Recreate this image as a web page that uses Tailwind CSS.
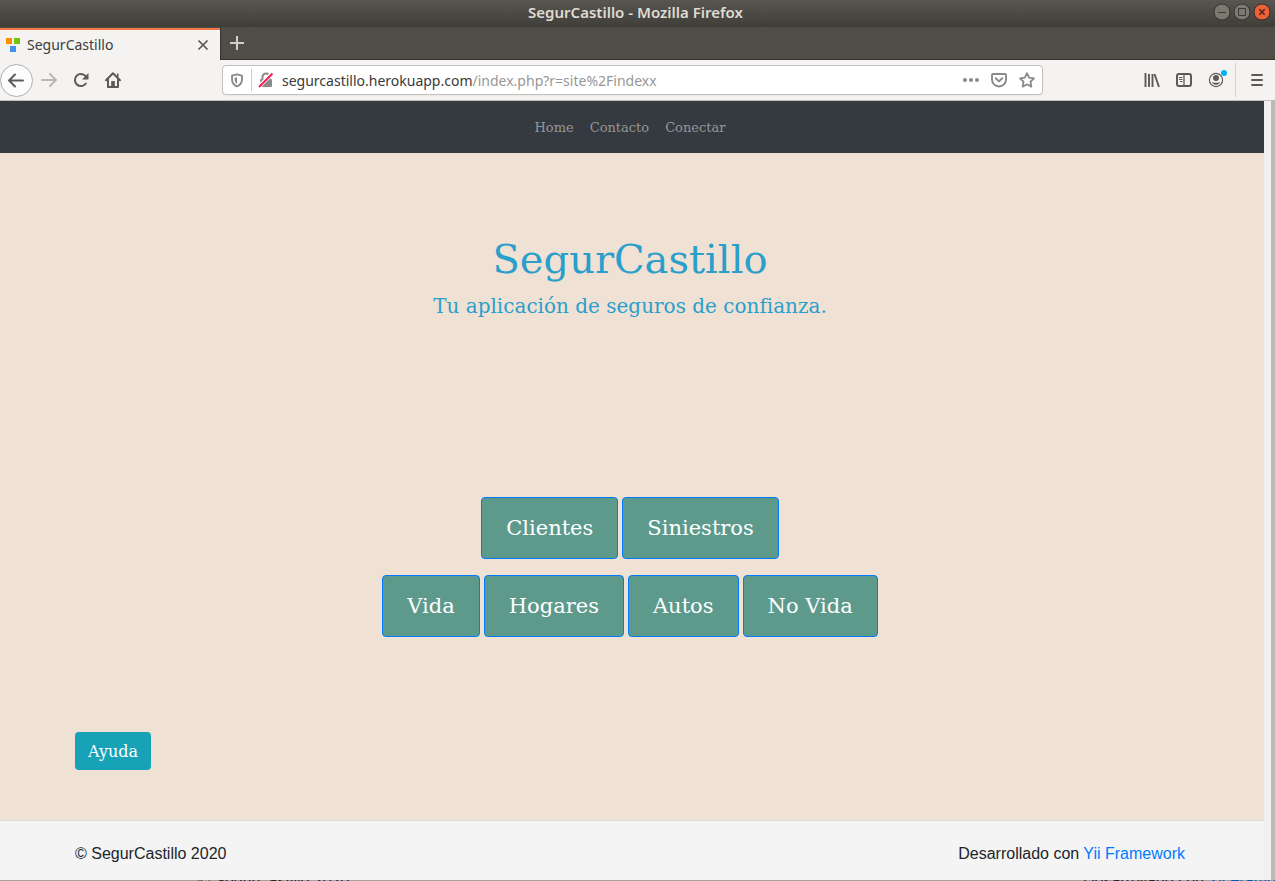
<!DOCTYPE html>
<html lang="es">
<head>
<meta charset="utf-8">
<title>SegurCastillo</title>
<script src="https://cdn.jsdelivr.net/npm/@tailwindcss/browser@4"></script>
</head>
<body class="flex h-screen flex-col overflow-hidden bg-[#f4f4f4] font-['Noto_Sans',sans-serif] text-[#3c3c3c]">

<!-- Window title bar -->
<header class="grid h-[27px] shrink-0 grid-cols-[1fr_auto_1fr] items-center bg-linear-to-b from-[#595650] to-[#3f3e39] pr-1 text-[#dfdbd2]">
  <span></span>
  <span class="pb-1 text-[15px] leading-5 font-semibold">SegurCastillo - Mozilla Firefox</span>
  <div class="flex justify-end gap-[2px] pb-[3px]">
    <button aria-label="Minimizar" class="size-[18px]"><svg viewBox="0 0 18 18" class="size-[18px]"><circle cx="9" cy="9" r="8" fill="#7b7970" stroke="#34332e"/><path d="M5 9.500h8" stroke="#3a3934" fill="none"/></svg></button>
    <button aria-label="Maximizar" class="size-[18px]"><svg viewBox="0 0 18 18" class="size-[18px]"><circle cx="9" cy="9" r="8" fill="#7b7970" stroke="#34332e"/><path d="M5.500 5.500h7v7h-7z" stroke="#3a3934" fill="none"/></svg></button>
    <button aria-label="Cerrar" class="size-[18px]"><svg viewBox="0 0 18 18" class="size-[18px]"><circle cx="9" cy="9" r="8" fill="#ed6137" stroke="#3d2a20"/><path d="M6.300 6.300l5.400 5.400M11.700 6.300l-5.400 5.400" stroke="#45251a" stroke-width="1.400" fill="none"/></svg></button>
  </div>
</header>

<!-- Tab strip -->
<div class="flex h-[33px] shrink-0 bg-[#504d46]">
  <div class="mt-px flex w-[220px] items-center border-t-2 border-[#f07746] bg-[#f4f3f2] pr-[10px] pb-px pl-[6px]">
    <svg viewBox="0 0 15 15" class="size-[15px]"><path fill="#ff8c00" d="M0 1h6v6H0z"/><path fill="#73c50c" d="M8 1h6v6H8z"/><path fill="#4291ee" d="M4 9h6v6H4z"/></svg>
    <span class="ml-[6px] flex-1 text-[14px] leading-5">SegurCastillo</span>
    <button aria-label="Cerrar pestaña"><svg viewBox="0 0 14 14" class="size-[14px]"><path d="M2.500 2.500l9 9M11.500 2.500l-9 9" stroke="#55534f" stroke-width="1.600" fill="none"/></svg></button>
  </div>
  <div class="flex flex-1 items-center border-b border-l border-[#35332e] pl-2">
    <button aria-label="Nueva pestaña"><svg viewBox="0 0 16 16" class="size-4"><path d="M8 1v14M1 8h14" stroke="#d2cfc8" stroke-width="2" fill="none"/></svg></button>
  </div>
</div>

<!-- Toolbar -->
<div class="flex h-[41px] shrink-0 items-center border-b border-[#c2bfbc] bg-[#f4f3f2] text-[#5c5b59]">
  <button aria-label="Atrás" class="size-[33px]"><svg viewBox="0 0 33 33" class="size-[33px]"><circle cx="16.500" cy="16.500" r="16" fill="#fcfcfc" stroke="#b0aeab"/><path d="M23 16.500H9M15 10.500l-6 6 6 6" fill="none" stroke="currentColor" stroke-width="2" stroke-linecap="round" stroke-linejoin="round"/></svg></button>
  <button aria-label="Adelante" class="ml-2 text-[#b9b7b5]"><svg viewBox="0 0 16 16" class="size-4"><path d="M1 8h14M9 2l6 6-6 6" fill="none" stroke="currentColor" stroke-width="2" stroke-linecap="round" stroke-linejoin="round"/></svg></button>
  <button aria-label="Recargar" class="ml-4"><svg viewBox="0 0 16 16" class="size-4"><path d="M12.800 11.500A6 6 0 1 1 12.500 4.200" fill="none" stroke="currentColor" stroke-width="2" stroke-linecap="round"/><path d="M15.500 1v6.500H9z" fill="currentColor"/></svg></button>
  <button aria-label="Inicio" class="ml-4"><svg viewBox="0 0 16 16" class="size-4"><path d="M1 8.300L8 1.300l7 7M3 7.500V15h10V7.500" fill="none" stroke="currentColor" stroke-width="2" stroke-linecap="round" stroke-linejoin="round"/><path d="M6.200 15V9h3.600v6M12 1.500h1.500V5H12z" fill="currentColor"/></svg></button>

  <div class="ml-[101px] flex h-[30px] min-w-0 flex-1 items-center rounded border border-[#c4c2bf] bg-white px-[7px] text-[#8a8988] shadow-xs">
    <svg viewBox="0 0 14 16" class="h-[15px] w-[14px]"><path d="M7 1.500l5.300 1.300V7c0 3.500-2 6-5.300 7.300C3.700 13 1.700 10.500 1.700 7V2.800z" fill="none" stroke="currentColor" stroke-width="2" stroke-linejoin="round"/><path d="M7 4.500v7C5.200 10.400 4.500 9 4.500 7V5z" fill="currentColor"/></svg>
    <span class="ml-[7px] h-[22px] w-px bg-[#d0cfcd]"></span>
    <svg viewBox="0 0 16 16" class="ml-[6px] size-4"><path d="M4.500 8V5a3.500 3.500 0 0 1 7 0v3" fill="none" stroke="currentColor" stroke-width="2"/><rect x="2" y="7" width="12" height="8" rx="1" fill="currentColor"/><path d="M1 14.500L14.500 1" stroke="#fff" stroke-width="4"/><path d="M1 15L14.500 1.500" stroke="#ff1a4e" stroke-width="2"/></svg>
    <a href="#" class="ml-2 flex-1 pt-0.5 text-[14px] leading-5 text-[#989796]"><span class="text-[#3a3a3a]">segurcastillo.herokuapp.com</span>/index.php?r=site%2Findexx</a>
    <button aria-label="Acciones de página"><svg viewBox="0 0 16 16" class="size-4"><circle cx="2" cy="8" r="2" fill="currentColor"/><circle cx="8" cy="8" r="2" fill="currentColor"/><circle cx="14" cy="8" r="2" fill="currentColor"/></svg></button>
    <button aria-label="Guardar en Pocket" class="ml-3"><svg viewBox="0 0 16 16" class="size-4"><path d="M2 2h12a1 1 0 0 1 1 1v4.500a7 7 0 0 1-14 0V3a1 1 0 0 1 1-1z" fill="none" stroke="currentColor" stroke-width="1.900"/><path d="M4.800 6.300L8 9.400l3.200-3.100" fill="none" stroke="currentColor" stroke-width="2" stroke-linecap="round" stroke-linejoin="round"/></svg></button>
    <button aria-label="Añadir marcador" class="ml-3"><svg viewBox="0 0 16 16" class="size-4"><path d="M8 1.200l2.100 4.400 4.900.7-3.500 3.400.8 4.900L8 12.300l-4.300 2.300.8-4.900L1 6.300l4.900-.7z" fill="none" stroke="currentColor" stroke-width="1.800" stroke-linejoin="round"/></svg></button>
  </div>

  <button aria-label="Catálogo" class="ml-[101px]"><svg viewBox="0 0 16 16" class="size-4"><path d="M1.500 1v14M5 2v13M8.500 2v13M10.500 2l4.500 13" fill="none" stroke="currentColor" stroke-width="1.900"/></svg></button>
  <button aria-label="Barra lateral" class="ml-4"><svg viewBox="0 0 16 16" class="size-4"><rect x="1" y="2" width="14" height="12" rx="2" fill="none" stroke="currentColor" stroke-width="2"/><path d="M8 2v12" stroke="currentColor" stroke-width="1.300"/><path d="M3 5.500h3.500M3 7.500h3.500M4 9.500h2.500" stroke="currentColor"/></svg></button>
  <button aria-label="Cuenta" class="ml-4"><svg viewBox="0 0 20 20" class="size-5"><circle cx="8" cy="10" r="6.600" fill="none" stroke="currentColor" stroke-width="1.200"/><circle cx="8" cy="8" r="3" fill="currentColor"/><path d="M3.800 11.700c1.200.9 2.700 1.100 4.200 1.100s3-.2 4.200-1.100c-.6 2-2.200 3-4.200 3s-3.600-1-4.200-3z" fill="currentColor"/><circle cx="16" cy="3" r="3" fill="#00b3f4"/></svg></button>
  <span class="ml-[7px] h-[34px] w-px bg-[#d6d4d2]"></span>
  <button aria-label="Menú" class="mr-3 ml-[15px]"><svg viewBox="0 0 12 14" class="h-[14px] w-3"><path d="M1 2h10M1 7h10M1 12h10" stroke="currentColor" stroke-width="2" stroke-linecap="round"/></svg></button>
</div>

<!-- Viewport -->
<div class="flex min-h-0 flex-1">
  <div class="flex min-w-0 flex-1 flex-col bg-[#efe1d4] font-['DejaVu_Serif',serif]">
    <nav class="flex h-[52px] shrink-0 items-center justify-center gap-4 bg-[#343a40] pt-0.5 pr-1 text-[13px] leading-5 text-[#949698]">
      <a href="#">Home</a>
      <a href="#">Contacto</a>
      <a href="#">Conectar</a>
    </nav>
    <main class="flex flex-1 flex-col items-center pr-1">
      <h1 class="mt-[82px] text-[40px] leading-[48px] text-[#2b9fcc]">SegurCastillo</h1>
      <p class="mt-2 text-[20px] leading-[30px] text-[#2b9fcc]">Tu aplicación de seguros de confianza.</p>
      <div class="mt-44 flex gap-1 text-[21px] leading-[30px] text-white">
        <button class="rounded-sm border border-[#007bff] bg-[#5d9a8c] px-6 py-[15px]">Clientes</button>
        <button class="rounded-sm border border-[#007bff] bg-[#5d9a8c] px-6 py-[15px]">Siniestros</button>
      </div>
      <div class="mt-4 flex gap-1 text-[21px] leading-[30px] text-white">
        <button class="rounded-sm border border-[#007bff] bg-[#5d9a8c] px-6 py-[15px]">Vida</button>
        <button class="rounded-sm border border-[#007bff] bg-[#5d9a8c] px-6 py-[15px]">Hogares</button>
        <button class="rounded-sm border border-[#007bff] bg-[#5d9a8c] px-6 py-[15px]">Autos</button>
        <button class="rounded-sm border border-[#007bff] bg-[#5d9a8c] px-6 py-[15px]">No Vida</button>
      </div>
      <div class="mt-[95px] w-full max-w-[1110px]">
        <button class="rounded-sm bg-[#17a2b8] px-[13px] pt-2 pb-[6px] text-[16px] leading-6 text-white">Ayuda</button>
      </div>
    </main>
    <footer class="flex h-[60px] shrink-0 justify-center border-t border-[#dddddd] bg-[#f4f4f4] pt-5 pr-1 font-['Liberation_Sans',sans-serif] text-[16px] leading-6 text-[#212529]">
      <div class="flex w-full max-w-[1110px] justify-between pt-px">
        <p>© SegurCastillo 2020</p>
        <p>Desarrollado con <a href="#" class="text-[#007bff]">Yii Framework</a></p>
      </div>
    </footer>
  </div>
  <div class="flex w-[11px] shrink-0 justify-end bg-[#f1f0ef]"><div class="w-1 bg-[#bcbab8]"></div></div>
</div>

<!-- Edge of the window underneath -->
<div class="flex h-px shrink-0 justify-between overflow-hidden bg-[#a3a1a1] pl-[198px] font-['Liberation_Sans',sans-serif] text-[16px] leading-px whitespace-nowrap text-[#212529]">
  <p>© SegurCastillo 2020</p>
  <p class="w-48">Desarrollado con <a href="#" class="text-[#0056b3]">Yii Framework</a></p>
</div>
</body>
</html>
